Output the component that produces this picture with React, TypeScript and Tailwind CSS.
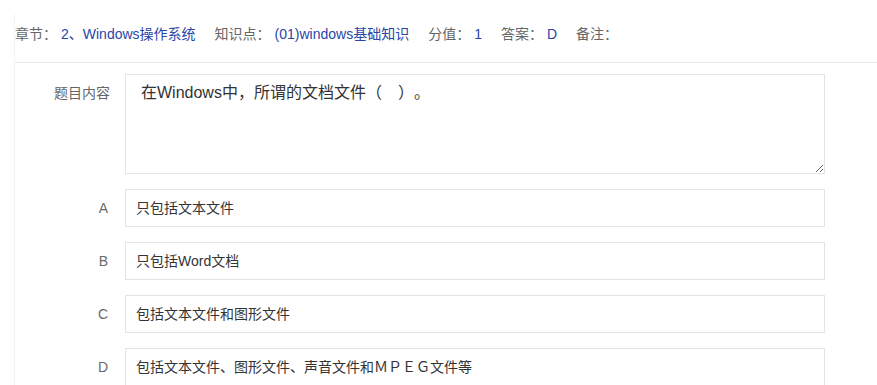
const meta = [
  { label: "章节：", value: "2、Windows操作系统" },
  { label: "知识点：", value: "(01)windows基础知识" },
  { label: "分值：", value: "1" },
  { label: "答案：", value: "D" },
  { label: "备注：", value: "" },
];

const options = [
  { key: "A", text: "只包括文本文件" },
  { key: "B", text: "只包括Word文档" },
  { key: "C", text: "包括文本文件和图形文件" },
  { key: "D", text: "包括文本文件、图形文件、声音文件和ＭＰＥＧ文件等" },
];

export default function App() {
  return (
    <div className="h-[385px] overflow-hidden bg-white pt-[14px] font-['Liberation_Sans','Noto_Sans_CJK_SC',sans-serif] [text-spacing-trim:space-all]">
      <div className="ml-[14px] h-full border-l border-[#f4f4f4]">
        {/* Question meta */}
        <div className="flex h-[49px] items-start gap-x-[19px] border-b border-[#e8e8e8] pt-[10px] text-[14px] leading-5">
          {meta.map((m) => (
            <span key={m.label} className="flex items-center">
              <span className="text-[#666]">{m.label}</span>
              {m.value && <span className="ml-[4px] text-[#2a45a8]">{m.value}</span>}
            </span>
          ))}
        </div>

        {/* Stem */}
        <div className="mt-[11px] flex">
          <div className="w-[95px] pt-[9px] text-right text-[14px] leading-5 text-[#666]">题目内容</div>
          <textarea
            readOnly
            defaultValue="在Windows中，所谓的文档文件（　）。"
            className="ml-[15px] h-[100px] w-[700px] border border-[#e4e4e4] px-[15px] pt-[6px] text-[16px] leading-6 text-[#333] outline-none [text-spacing-trim:space-all]"
          />
        </div>

        {/* Options */}
        <div className="mt-[15px] flex flex-col gap-[15px]">
          {options.map((o) => (
            <div key={o.key} className="flex items-center">
              <div className="w-[95px] pr-[2px] text-right text-[14px] text-[#6a6a6a]">{o.key}</div>
              <div className="ml-[15px] flex h-[38px] w-[700px] items-center border border-[#e4e4e4] px-[10px] text-[14px] text-[#333]">
                {o.text}
              </div>
            </div>
          ))}
        </div>
      </div>
    </div>
  );
}
